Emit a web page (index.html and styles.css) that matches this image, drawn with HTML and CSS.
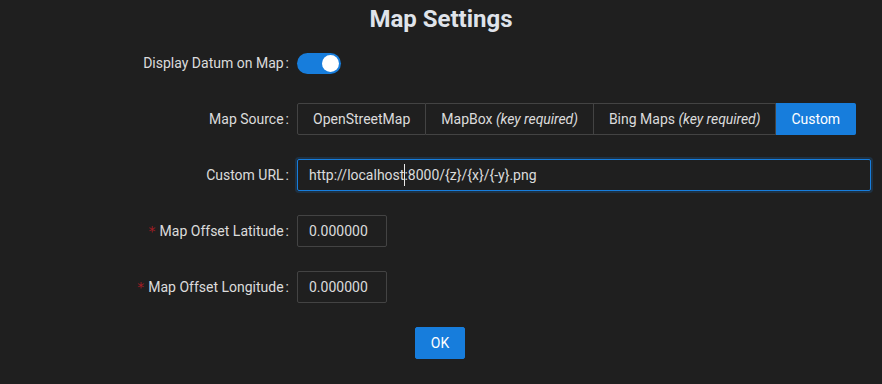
FILE: index.html
```html
<!DOCTYPE html>
<html>
<head>
    <title>Map Settings</title>
    <link rel="stylesheet" href="styles.css">
</head>
<body>
    <h2 class="title">Map Settings</h2>
    <form class="settings-form">
        <div class="form-row">
            <label class="form-label">Display Datum on Map</label>
            <div class="form-control">
                <span class="switch"><span class="switch-knob"></span></span>
            </div>
        </div>
        <div class="form-row">
            <label class="form-label">Map Source</label>
            <div class="form-control">
                <div class="radio-group">
                    <span class="radio-btn">OpenStreetMap</span>
                    <span class="radio-btn">MapBox <i>(key required)</i></span>
                    <span class="radio-btn">Bing Maps <i>(key required)</i></span>
                    <span class="radio-btn checked">Custom</span>
                </div>
            </div>
        </div>
        <div class="form-row">
            <label class="form-label">Custom URL</label>
            <div class="form-control input-wrap">
                <input class="text-input focused" type="text" value="http://localhost:8000/{z}/{x}/{-y}.png">
                <span class="mouse-caret"></span>
            </div>
        </div>
        <div class="form-row">
            <label class="form-label required">Map Offset Latitude</label>
            <div class="form-control">
                <input class="text-input small" type="text" value="0.000000">
            </div>
        </div>
        <div class="form-row">
            <label class="form-label required">Map Offset Longitude</label>
            <div class="form-control">
                <input class="text-input small" type="text" value="0.000000">
            </div>
        </div>
        <div class="form-actions">
            <button type="button" class="ok-btn">OK</button>
        </div>
    </form>
</body>
</html>
```

FILE: styles.css
```css
body {
    margin: 0;
    background: #1f1f1f;
    color: rgba(255,255,255,0.85);
    font-family: Roboto, "Liberation Sans", sans-serif;
    font-size: 14px;
}
.title {
    margin: 3px 0 12px;
    font-size: 24px;
    line-height: 32px;
    font-weight: 700;
    text-align: center;
    color: #dfe3ea;
}
.settings-form {
    padding-right: 11px;
}
.form-row {
    display: grid;
    grid-template-columns: 297px 1fr;
    height: 32px;
    margin-bottom: 24px;
}
.form-label {
    display: flex;
    align-items: center;
    justify-content: flex-end;
    line-height: 32px;
    white-space: nowrap;
}
.form-label::after {
    content: ":";
    margin: 0 8px 0 2px;
}
.form-label.required::before {
    content: "*";
    color: #a61d24;
    margin-right: 4px;
    font-family: SimSun, "DejaVu Sans", sans-serif;
    font-size: 14px;
}
.form-control {
    display: flex;
    align-items: center;
}
.input-wrap {
    position: relative;
}
.mouse-caret {
    position: absolute;
    left: 107px;
    top: 5px;
    width: 1px;
    height: 22px;
    background: #e8e8e8;
}
.switch {
    position: relative;
    width: 44px;
    height: 21px;
    border-radius: 11px;
    background: #177ddc;
}
.switch-knob {
    position: absolute;
    top: 2px;
    right: 2px;
    width: 17px;
    height: 17px;
    border-radius: 50%;
    background: #fff;
}
.radio-group {
    display: flex;
}
.radio-btn {
    height: 32px;
    box-sizing: border-box;
    line-height: 30px;
    padding: 0 15px;
    border: 1px solid #434343;
    border-left-width: 0;
    white-space: nowrap;
}
.radio-btn i {
    letter-spacing: -0.05px;
}
.radio-btn:first-child {
    border-left-width: 1px;
    border-radius: 2px 0 0 2px;
}
.radio-btn:last-child {
    border-radius: 0 2px 2px 0;
}
.radio-btn.checked {
    background: #177ddc;
    border-color: #177ddc;
    color: #fff;
}
.text-input {
    box-sizing: border-box;
    height: 32px;
    width: 100%;
    padding: 4px 11px;
    background: transparent;
    border: 1px solid #434343;
    border-radius: 2px;
    color: rgba(255,255,255,0.85);
    font-family: inherit;
    font-size: 14px;
    outline: none;
}
.text-input.focused {
    border-color: #177ddc;
    box-shadow: 0 0 0 2px rgba(23,125,220,0.2);
}
.text-input.small {
    width: 90px;
}
.form-actions {
    display: flex;
    justify-content: center;
    padding-left: 9px;
}
.ok-btn {
    height: 32px;
    padding: 4px 15px;
    background: #177ddc;
    border: 1px solid #177ddc;
    border-radius: 2px;
    color: #fff;
    font-family: inherit;
    font-size: 14px;
}
```
